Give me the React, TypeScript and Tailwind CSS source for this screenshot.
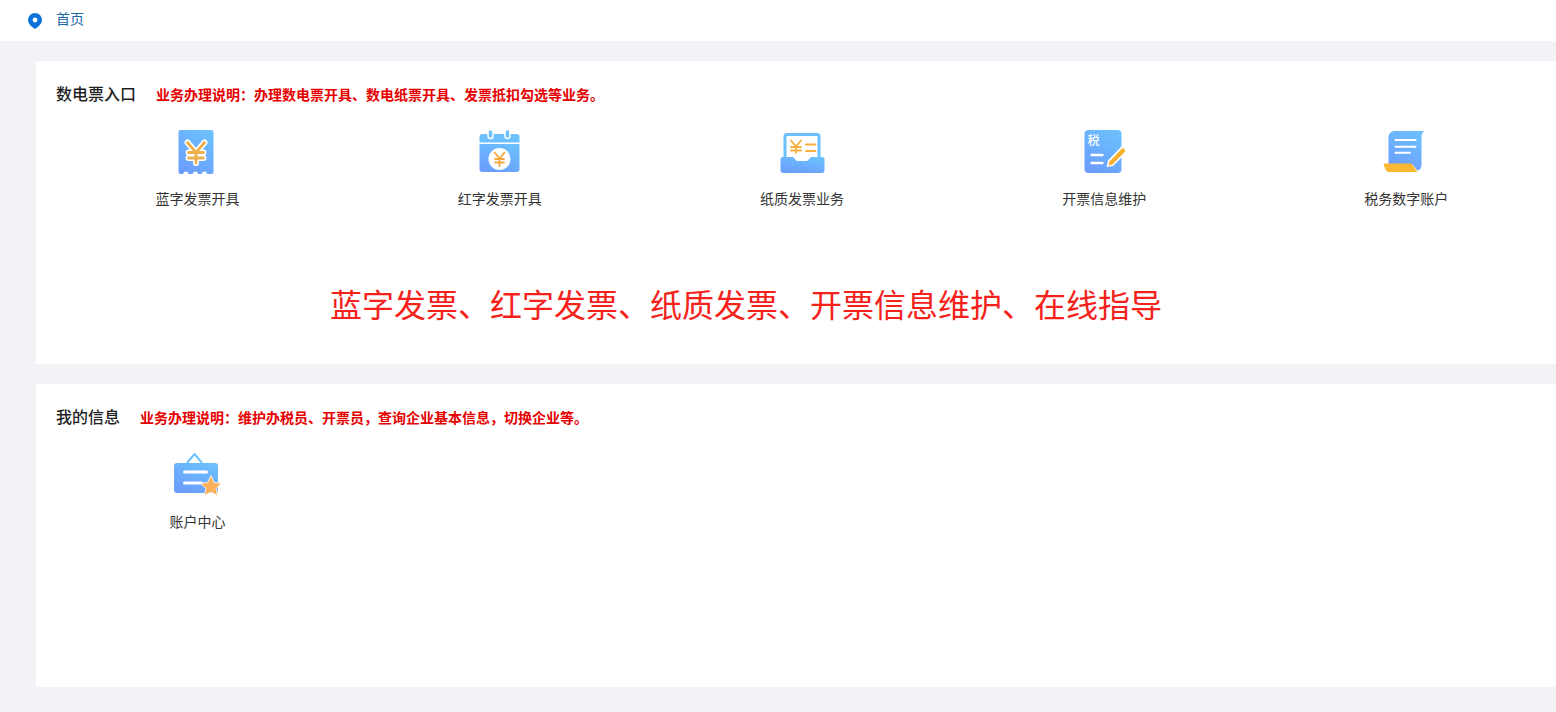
import React from 'react';

const font = "font-['Noto_Sans_CJK_SC','Liberation_Sans',sans-serif]";

const Defs = ({ id }: { id: string }) => (
  <defs>
    <linearGradient id={id} x1="0.75" y1="0" x2="0.25" y2="1">
      <stop offset="0" stopColor="#6cc0fd" />
      <stop offset="1" stopColor="#6b9dfd" />
    </linearGradient>
  </defs>
);

const ReceiptIcon = () => (
  <svg width="48" height="48" viewBox="0 0 48 48">
    <Defs id="g1" />
    <path
      d="M4.500 4a2 2 0 0 1 2-2h31a2 2 0 0 1 2 2v40a2 2 0 0 1-2 2H33a2.600 2.600 0 0 0-5.200 0h-3.800a2.600 2.600 0 0 0-5.200 0h-4.300a2.600 2.600 0 0 0-5.200 0H6.500a2 2 0 0 1-2-2z"
      fill="url(#g1)"
    />
    <path d="M13.500 14.500l8.500 10 8.500-10M22 24.500V35M14.500 24.500h15M14.500 30h15" fill="none" stroke="#fff" strokeWidth="6" strokeLinecap="round" strokeLinejoin="round" />
    <path d="M13.500 14.500l8.500 10 8.500-10M22 24.500V35M14.500 24.500h15M14.500 30h15" fill="none" stroke="#eeb04f" strokeWidth="2.800" strokeLinecap="round" strokeLinejoin="round" />
  </svg>
);

const CalendarIcon = () => (
  <svg width="48" height="48" viewBox="0 0 48 48">
    <Defs id="g2" />
    <path d="M3.500 9a3 3 0 0 1 3-3h34a3 3 0 0 1 3 3v5.500h-40z" fill="#6cc0fd" />
    <path d="M3.500 16h40v25a3 3 0 0 1-3 3h-34a3 3 0 0 1-3-3z" fill="url(#g2)" />
    <rect x="12" y="1.500" width="5" height="9" rx="2.500" fill="#6cc0fd" stroke="#fff" strokeWidth="1.500" />
    <rect x="29" y="1.500" width="5" height="9" rx="2.500" fill="#6cc0fd" stroke="#fff" strokeWidth="1.500" />
    <circle cx="23.500" cy="31" r="11" fill="#fff" />
    <path d="M18.500 24.500l5 6 5-6M23.500 30.500V38M19 31h9M19 34.500h9" fill="none" stroke="#f5a93c" strokeWidth="1.800" strokeLinecap="round" />
  </svg>
);

const TrayIcon = () => (
  <svg width="48" height="48" viewBox="0 0 48 48">
    <Defs id="g3" />
    <rect x="7" y="6.500" width="34" height="30" rx="2" fill="#fff" stroke="#6cc0fd" strokeWidth="3" />
    <path d="M13 12.500l5 6 5-6M18 18.500V25M13 19h10M13 22.500h10M28 16.500h9.500M28 23h9.500" fill="none" stroke="#f5b041" strokeWidth="1.800" strokeLinecap="round" />
    <path d="M2.500 31a2 2 0 0 1 2-2h9.500c1 0 1.500.4 2 1l1.500 1.800c.5.700 1 1.200 2 1.200h9c1 0 1.500-.5 2-1.200L32 30c.5-.6 1-1 2-1h10.500a2 2 0 0 1 2 2V42a3 3 0 0 1-3 3h-38a3 3 0 0 1-3-3z" fill="url(#g3)" />
  </svg>
);

const TaxIcon = () => (
  <svg width="48" height="48" viewBox="0 0 48 48">
    <Defs id="g4" />
    <rect x="4.500" y="2" width="37" height="43" rx="4" fill="url(#g4)" />
    <text x="7.500" y="17" fill="#fff" fontSize="12" fontWeight="500" fontFamily="'Noto Sans CJK SC', sans-serif">税</text>
    <path d="M11.500 27h11M11.500 35h11" stroke="#fff" strokeWidth="2.500" strokeLinecap="round" />
    <path d="M26.500 39l1.500-6.500L42.500 17.500l5.500 5.500L33 38z" fill="#fff" />
    <path d="M29.500 33.500L42.700 19.800l3 3L32.500 36.500l-4 1z" fill="#f6ae2d" />
  </svg>
);

const ScrollIcon = () => (
  <svg width="48" height="48" viewBox="0 0 48 48">
    <Defs id="g5" />
    <path d="M6.500 9a6 6 0 0 1 6-6h30c-2 1-3 3-3 6v27c0 3-1 6-4 6.500L30 36H6.500z" fill="url(#g5)" />
    <path d="M13.500 12h20M13.500 18.700h20M13.500 24.700h14.500" stroke="#fff" strokeWidth="2" strokeLinecap="round" />
    <path d="M3.500 35.500h26l6 8.500H7c-2.500 0-4.500-3.500-5.500-8.500z" fill="#f9b934" />
  </svg>
);

const AccountIcon = () => (
  <svg width="48" height="48" viewBox="0 0 48 48">
    <Defs id="g6" />
    <path d="M13 12l7.500-9L28 12" fill="none" stroke="#6cc0fd" strokeWidth="2" />
    <path d="M0 15a3 3 0 0 1 3-3h38a3 3 0 0 1 3 3v24a3 3 0 0 1-3 3H3a3 3 0 0 1-3-3z" fill="url(#g6)" />
    <path d="M10.500 21h22M10.500 32h17" stroke="#fff" strokeWidth="3" strokeLinecap="round" />
    <path
      d="M37 24.500l3.300 7 7.200.8-5.300 5.100 1.400 7.300-6.600-3.600-6.600 3.600 1.400-7.300-5.300-5.100 7.200-.8z"
      fill="#fbb05c"
      stroke="#fff"
      strokeWidth="0.800"
      strokeLinejoin="round"
    />
  </svg>
);

const entries = [
  { label: '蓝字发票开具', icon: <ReceiptIcon /> },
  { label: '红字发票开具', icon: <CalendarIcon /> },
  { label: '纸质发票业务', icon: <TrayIcon /> },
  { label: '开票信息维护', icon: <TaxIcon /> },
  { label: '税务数字账户', icon: <ScrollIcon /> },
];

const Entry = ({ label, icon }: { label: string; icon: React.ReactNode }) => (
  <div className="flex w-[302.2px] shrink-0 flex-col items-center">
    {icon}
    <div className="mt-3 h-5 text-sm leading-5 text-[#333]">{label}</div>
  </div>
);

const SectionTitle = ({ title, note }: { title: string; note: string }) => (
  <div className="flex h-5 items-center gap-5 pl-5">
    <span className="-mt-0.5 text-base font-medium leading-5 text-[#1f1f1f]">{title}</span>
    <span className="text-sm font-bold leading-5 text-[#e60000]">{note}</span>
  </div>
);

export default function App() {
  return (
    <div className={`min-h-[712px] overflow-hidden bg-[#f2f3f7] ${font}`}>
      {/* Breadcrumb */}
      <div className="flex h-[41px] items-start gap-[13px] bg-white pl-[27px] pt-[11px]">
        <svg width="16" height="18" viewBox="0 0 16 18" className="shrink-0">
          <path
            d="M8 2a7 7 0 0 1 7 7c0 3.400-3 6.500-7 9-4-2.500-7-5.600-7-9a7 7 0 0 1 7-7zm0 4.600a2.400 2.400 0 1 0 0 4.800 2.400 2.400 0 0 0 0-4.800z"
            fill="#0b73d9"
            fillRule="evenodd"
          />
        </svg>
        <span className="-mt-px text-sm leading-4 text-[#1a6aa8]">首页</span>
      </div>

      {/* Invoice entries */}
      <section className="ml-9 mt-5 h-[303px] bg-white pt-[23px]">
        <SectionTitle title="数电票入口" note="业务办理说明：办理数电票开具、数电纸票开具、发票抵扣勾选等业务。" />
        <div className="ml-[10.5px] mt-6 flex">
          {entries.map((e) => (
            <Entry key={e.label} label={e.label} icon={e.icon} />
          ))}
        </div>
        <div className="mt-[71px] pl-[294px] text-[32px] leading-[48px] text-[#f5221b]">
          蓝字发票、红字发票、纸质发票、开票信息维护、在线指导
        </div>
      </section>

      {/* My info */}
      <section className="ml-9 mt-5 h-[303px] bg-white pt-[23px]">
        <SectionTitle title="我的信息" note="业务办理说明：维护办税员、开票员，查询企业基本信息，切换企业等。" />
        <div className="ml-[10.5px] mt-6 flex">
          <Entry label="账户中心" icon={<AccountIcon />} />
        </div>
      </section>
    </div>
  );
}
